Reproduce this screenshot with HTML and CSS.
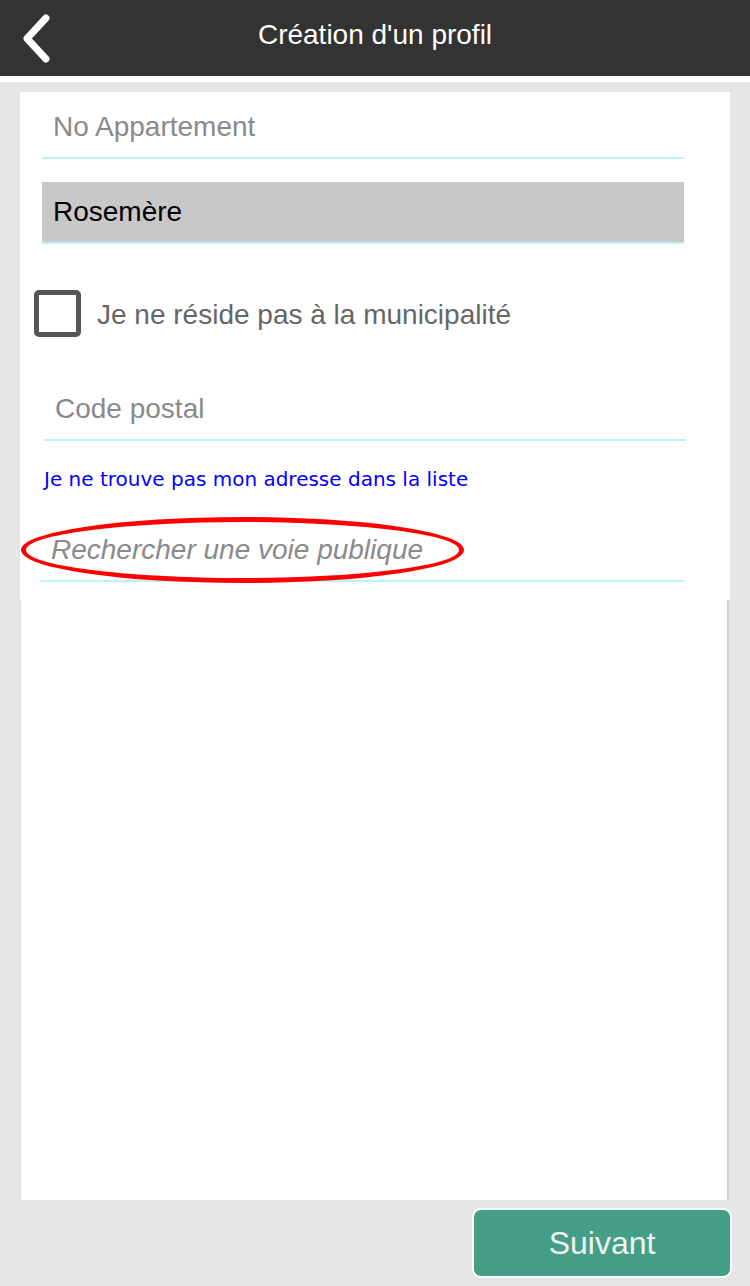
FILE: index.html
```html
<!DOCTYPE html>
<html lang="fr">
<head>
<meta charset="utf-8">
<title>Création d'un profil</title>
<link rel="stylesheet" href="styles.css">
</head>
<body>
<header class="topbar">
  <div class="back">
    <svg width="40" height="60" viewBox="0 0 40 60">
      <polyline points="24,13 5,33.5 24,54" fill="none" stroke="#fff" stroke-width="7" stroke-linecap="round" stroke-linejoin="round"/>
    </svg>
  </div>
  <h1 class="title">Création d'un profil</h1>
  <div></div>
</header>
<main class="main">
  <section class="card">
    <div class="field f-apt"><span class="ph">No Appartement</span></div>
    <div class="select"><span>Rosemère</span></div>
    <label class="check-row">
      <span class="checkbox"></span>
      <span class="check-label">Je ne réside pas à la municipalité</span>
    </label>
    <div class="field f-code"><span class="ph">Code postal</span></div>
    <a class="link" href="#">Je ne trouve pas mon adresse dans la liste</a>
    <div class="field f-search">
      <span class="ph italic">Rechercher une voie publique</span>
      <span class="ellipse"></span>
    </div>
  </section>
  <section class="results"></section>
  <div class="actions">
    <button class="next">Suivant</button>
  </div>
</main>
</body>
</html>
```
FILE: styles.css
```css
* { box-sizing: border-box; }
html, body { margin: 0; padding: 0; }
body {
  background: #e6e6e6;
  font-family: "Liberation Sans", Arial, sans-serif;
  width: 750px;
  height: 1286px;
  overflow: hidden;
}
.topbar {
  height: 82px;
  background: #333333;
  border-bottom: 6px solid #ffffff;
  display: grid;
  grid-template-columns: 1fr auto 1fr;
  align-items: center;
}
.back {
  padding-left: 22px;
  height: 60px;
  margin-top: -6px;
}
.back svg { display: block; }
.title {
  margin: 0;
  color: #ffffff;
  font-weight: normal;
  font-size: 28px;
  line-height: 30px;
  margin-top: -6px;
}
.main {
  padding-top: 10px;
}
.card {
  margin-left: 20px;
  width: 710px;
  background: #ffffff;
  padding-bottom: 18px;
  display: flex;
  flex-direction: column;
  align-items: flex-start;
}
.field {
  position: relative;
  width: 642px;
  padding: 20px 10px 15px;
  border-bottom: 2px solid #bff2f6;
  font-size: 28px;
  line-height: 30px;
}
.ph { color: #8a8a8a; }
.italic { font-style: italic; }
.f-apt { margin-left: 22px; padding-left: 11px; }
.select {
  margin-top: 23px;
  margin-left: 22px;
  width: 642px;
  height: 62px;
  background: #c8c8c8;
  border-bottom: 2px solid #bff2f6;
  padding-left: 11px;
  font-size: 28px;
  line-height: 60px;
  color: #000;
}
.check-row {
  margin-top: 46px;
  margin-left: 14px;
  display: flex;
  align-items: center;
  gap: 16px;
}
.checkbox {
  width: 47px;
  height: 47px;
  border: 5px solid #555555;
  border-radius: 5px;
  background: #fff;
}
.check-label {
  font-size: 28px;
  line-height: 30px;
  color: #666666;
  margin-top: 2px;
}
.f-code { margin-top: 37px; margin-left: 24px; padding-left: 11px; }
.link {
  margin-top: 28px;
  margin-left: 24px;
  font-family: "DejaVu Sans", Verdana, sans-serif;
  font-size: 20px;
  line-height: 20px;
  color: #0000ff;
  text-decoration: none;
}
.f-search {
  margin-top: 26px;
  margin-left: 20px;
  width: 644px;
  padding-left: 11px;
}
.ellipse {
  position: absolute;
  left: -19px;
  top: 2px;
  width: 443px;
  height: 66px;
  border: 5px solid #ff0000;
  border-radius: 50%;
}
.results {
  margin-left: 20px;
  width: 709px;
  height: 600px;
  background: #ffffff;
  border-left: 1px solid #dcdcdc;
  border-right: 2px solid #d4d4d4;
}
.actions {
  display: flex;
  justify-content: flex-end;
  padding: 8px 18px 8px 0;
}
.next {
  width: 260px;
  height: 70px;
  background: #459e86;
  border: 2px solid #ffffff;
  border-radius: 9px;
  color: #f2f2f2;
  font-family: "Liberation Sans", Arial, sans-serif;
  font-size: 32px;
  line-height: 32px;
  padding: 0;
}
```
